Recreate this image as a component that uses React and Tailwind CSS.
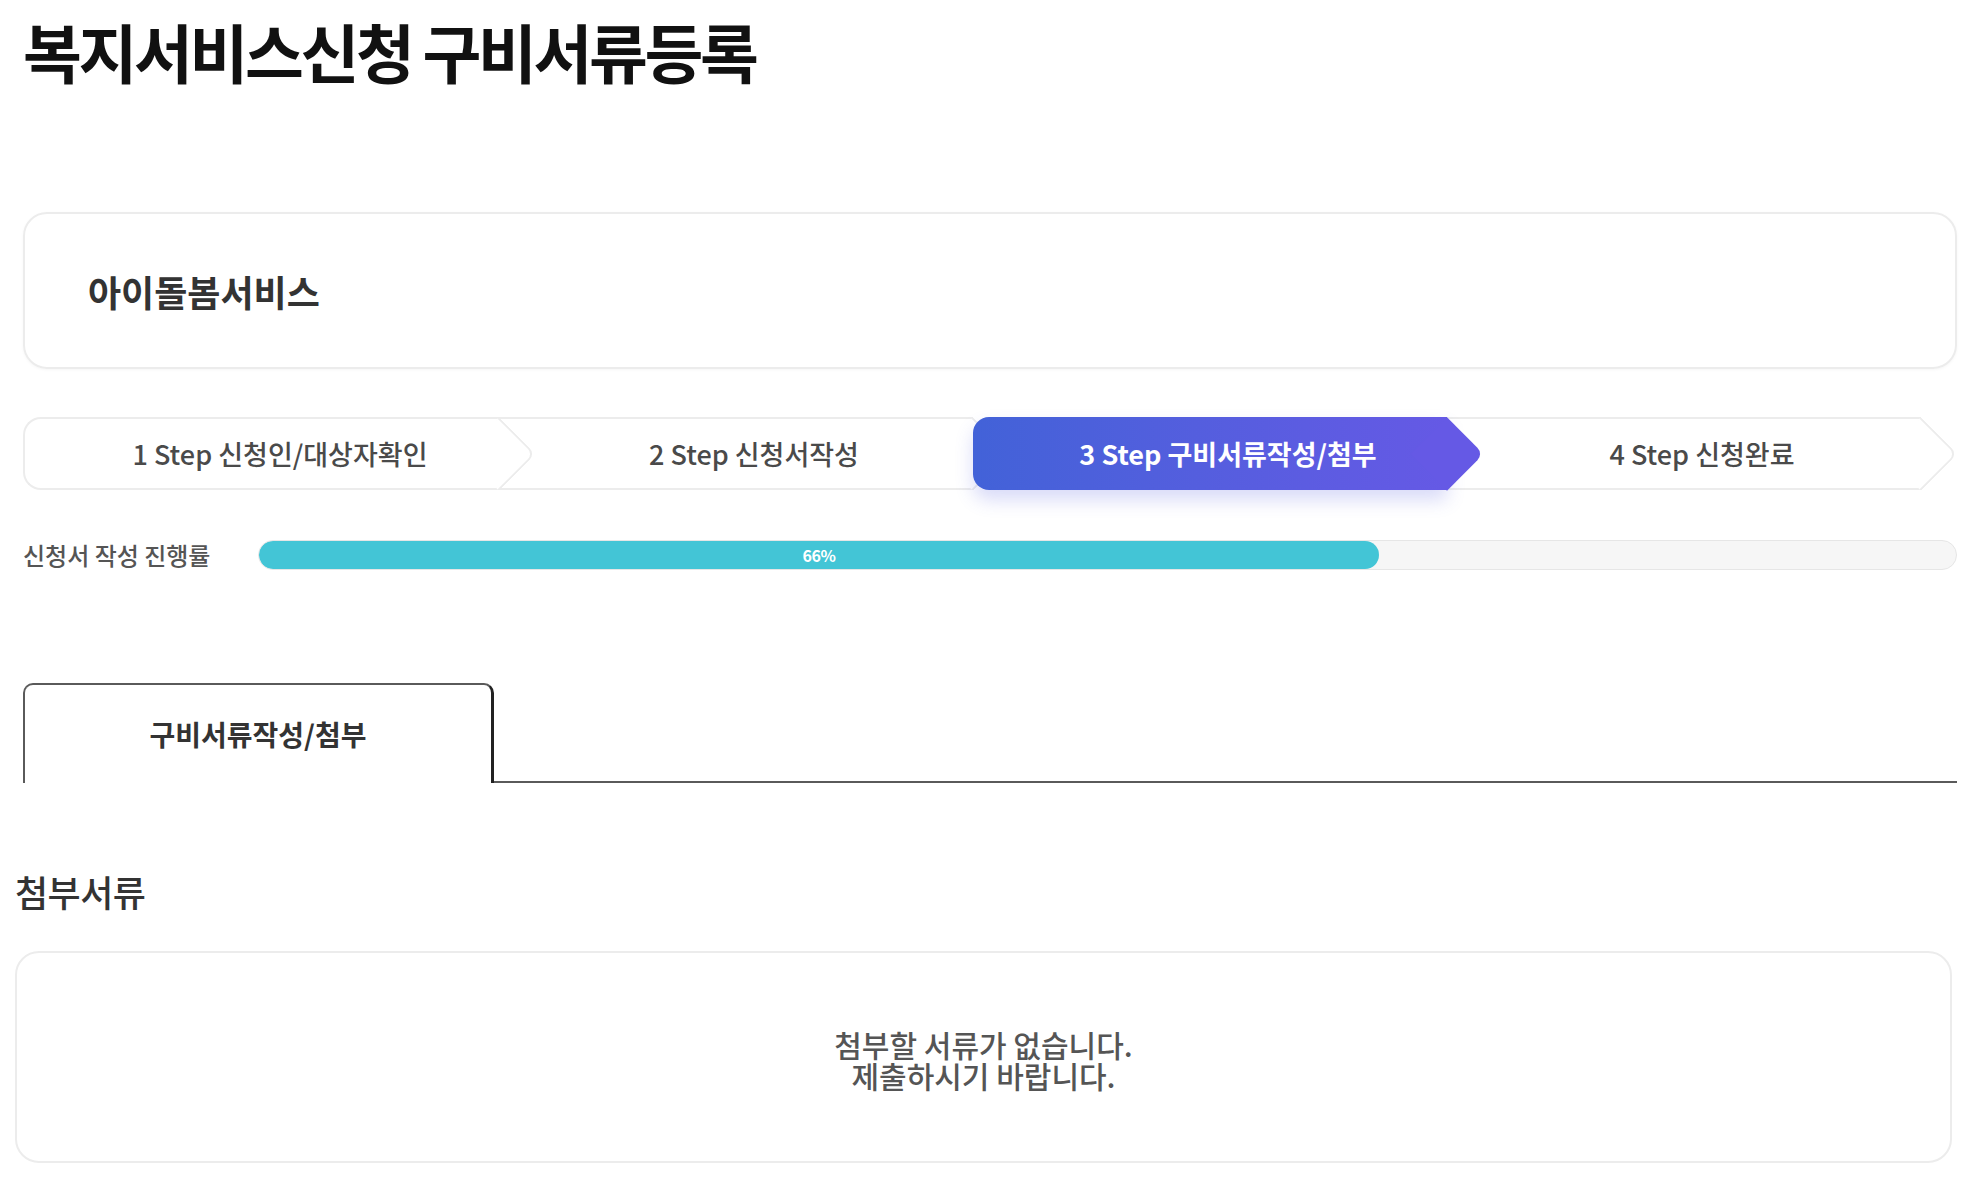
import React from "react";

const steps = [
  { label: "1 Step 신청인/대상자확인", z: "z-[4]", first: true },
  { label: "2 Step 신청서작성", z: "z-[3]" },
  { label: "3 Step 구비서류작성/첨부", z: "z-[10]", active: true },
  { label: "4 Step 신청완료", z: "z-[1]" },
];

function Step({ label, z, first, active }) {
  const base = "relative flex-1 flex items-center justify-center pl-[36px] border-y-2";
  const look = active
    ? "bg-gradient-to-r from-[#4262d8] to-[#6559e5] border-transparent rounded-l-[16px] shadow-[0_10px_18px_rgba(80,90,225,0.22)]"
    : "bg-white border-[#ececec]";
  const left = first ? "border-l-2 rounded-l-[18px]" : "";
  return (
    <div className={`${base} ${look} ${left} ${z}`}>
      <span
        className={
          active
            ? "absolute top-1/2 right-0 w-[52px] h-[52px] translate-x-1/2 -translate-y-1/2 rotate-45 bg-[#6559e5] rounded-tr-[9px]"
            : "absolute top-1/2 right-0 w-[52px] h-[52px] translate-x-1/2 -translate-y-1/2 rotate-45 bg-white border-t-2 border-r-2 border-[#ececec] rounded-tr-[9px]"
        }
      />
      <span
        className={
          active
            ? "relative text-[27px] leading-none tracking-[0px] font-bold text-white"
            : "relative text-[27px] leading-none tracking-[0px] font-medium text-[#4a4a4a]"
        }
      >
        {label}
      </span>
    </div>
  );
}

export default function App() {
  return (
    <div className="w-[1976px] min-h-[1186px] bg-white font-['Noto_Sans_CJK_KR','Noto_Sans',sans-serif] pb-[23px]">
      <div className="pl-[23px] pr-[19px]">
        <h1 className="pt-[18px] h-[82px] text-[64px] leading-none font-bold tracking-[-3.4px] text-[#111]">
          복지서비스신청 구비서류등록
        </h1>

        <div className="mt-[130px] h-[157px] border-2 border-[#ececec] rounded-[24px] flex items-center pl-[63px] shadow-[0_1px_3px_rgba(0,0,0,0.04)]">
          <span className="text-[36px] leading-none font-bold tracking-[0px] text-[#333]">
            아이돌봄서비스
          </span>
        </div>

        <div className="mt-[48px] flex h-[73px] pr-[36px]">
          {steps.map((s) => (
            <Step key={s.label} {...s} />
          ))}
        </div>

        <div className="mt-[50px] flex items-center h-[30px]">
          <span className="w-[235px] shrink-0 text-[24px] leading-none font-medium tracking-[0px] text-[#555]">
            신청서 작성 진행률
          </span>
          <div className="flex-1 h-[30px] rounded-full bg-[#f6f6f6] border border-[#e6e6e6] overflow-hidden">
            <div className="w-[66%] h-full rounded-full bg-[#43c5d6] flex items-center justify-center">
              <span className="text-[16px] leading-none font-bold tracking-[-0.5px] text-white">66%</span>
            </div>
          </div>
        </div>

        <div className="mt-[113px] flex items-end">
          <div className="w-[471px] h-[100px] border-t-2 border-l-2 border-r-[3px] border-t-[#5a5a5a] border-l-[#5a5a5a] border-r-[#222] rounded-t-[10px] flex items-center justify-center">
            <span className="text-[28px] leading-none font-bold tracking-[0px] text-[#333]">
              구비서류작성/첨부
            </span>
          </div>
          <div className="flex-1 border-b-2 border-[#5a5a5a]" />
        </div>
      </div>

      <div className="pl-[15px] pr-[24px]">
        <h2 className="mt-[90px] text-[36px] leading-none font-medium tracking-[-0.5px] text-[#333]">
          첨부서류
        </h2>
        <div className="mt-[42px] h-[212px] border-2 border-[#ececec] rounded-[24px] flex flex-col items-center justify-center pt-[6px]">
          <p className="text-[30px] leading-[31px] font-medium tracking-[0px] text-[#555] text-center">
            첨부할 서류가 없습니다.
            <br />
            제출하시기 바랍니다.
          </p>
        </div>
      </div>
    </div>
  );
}
